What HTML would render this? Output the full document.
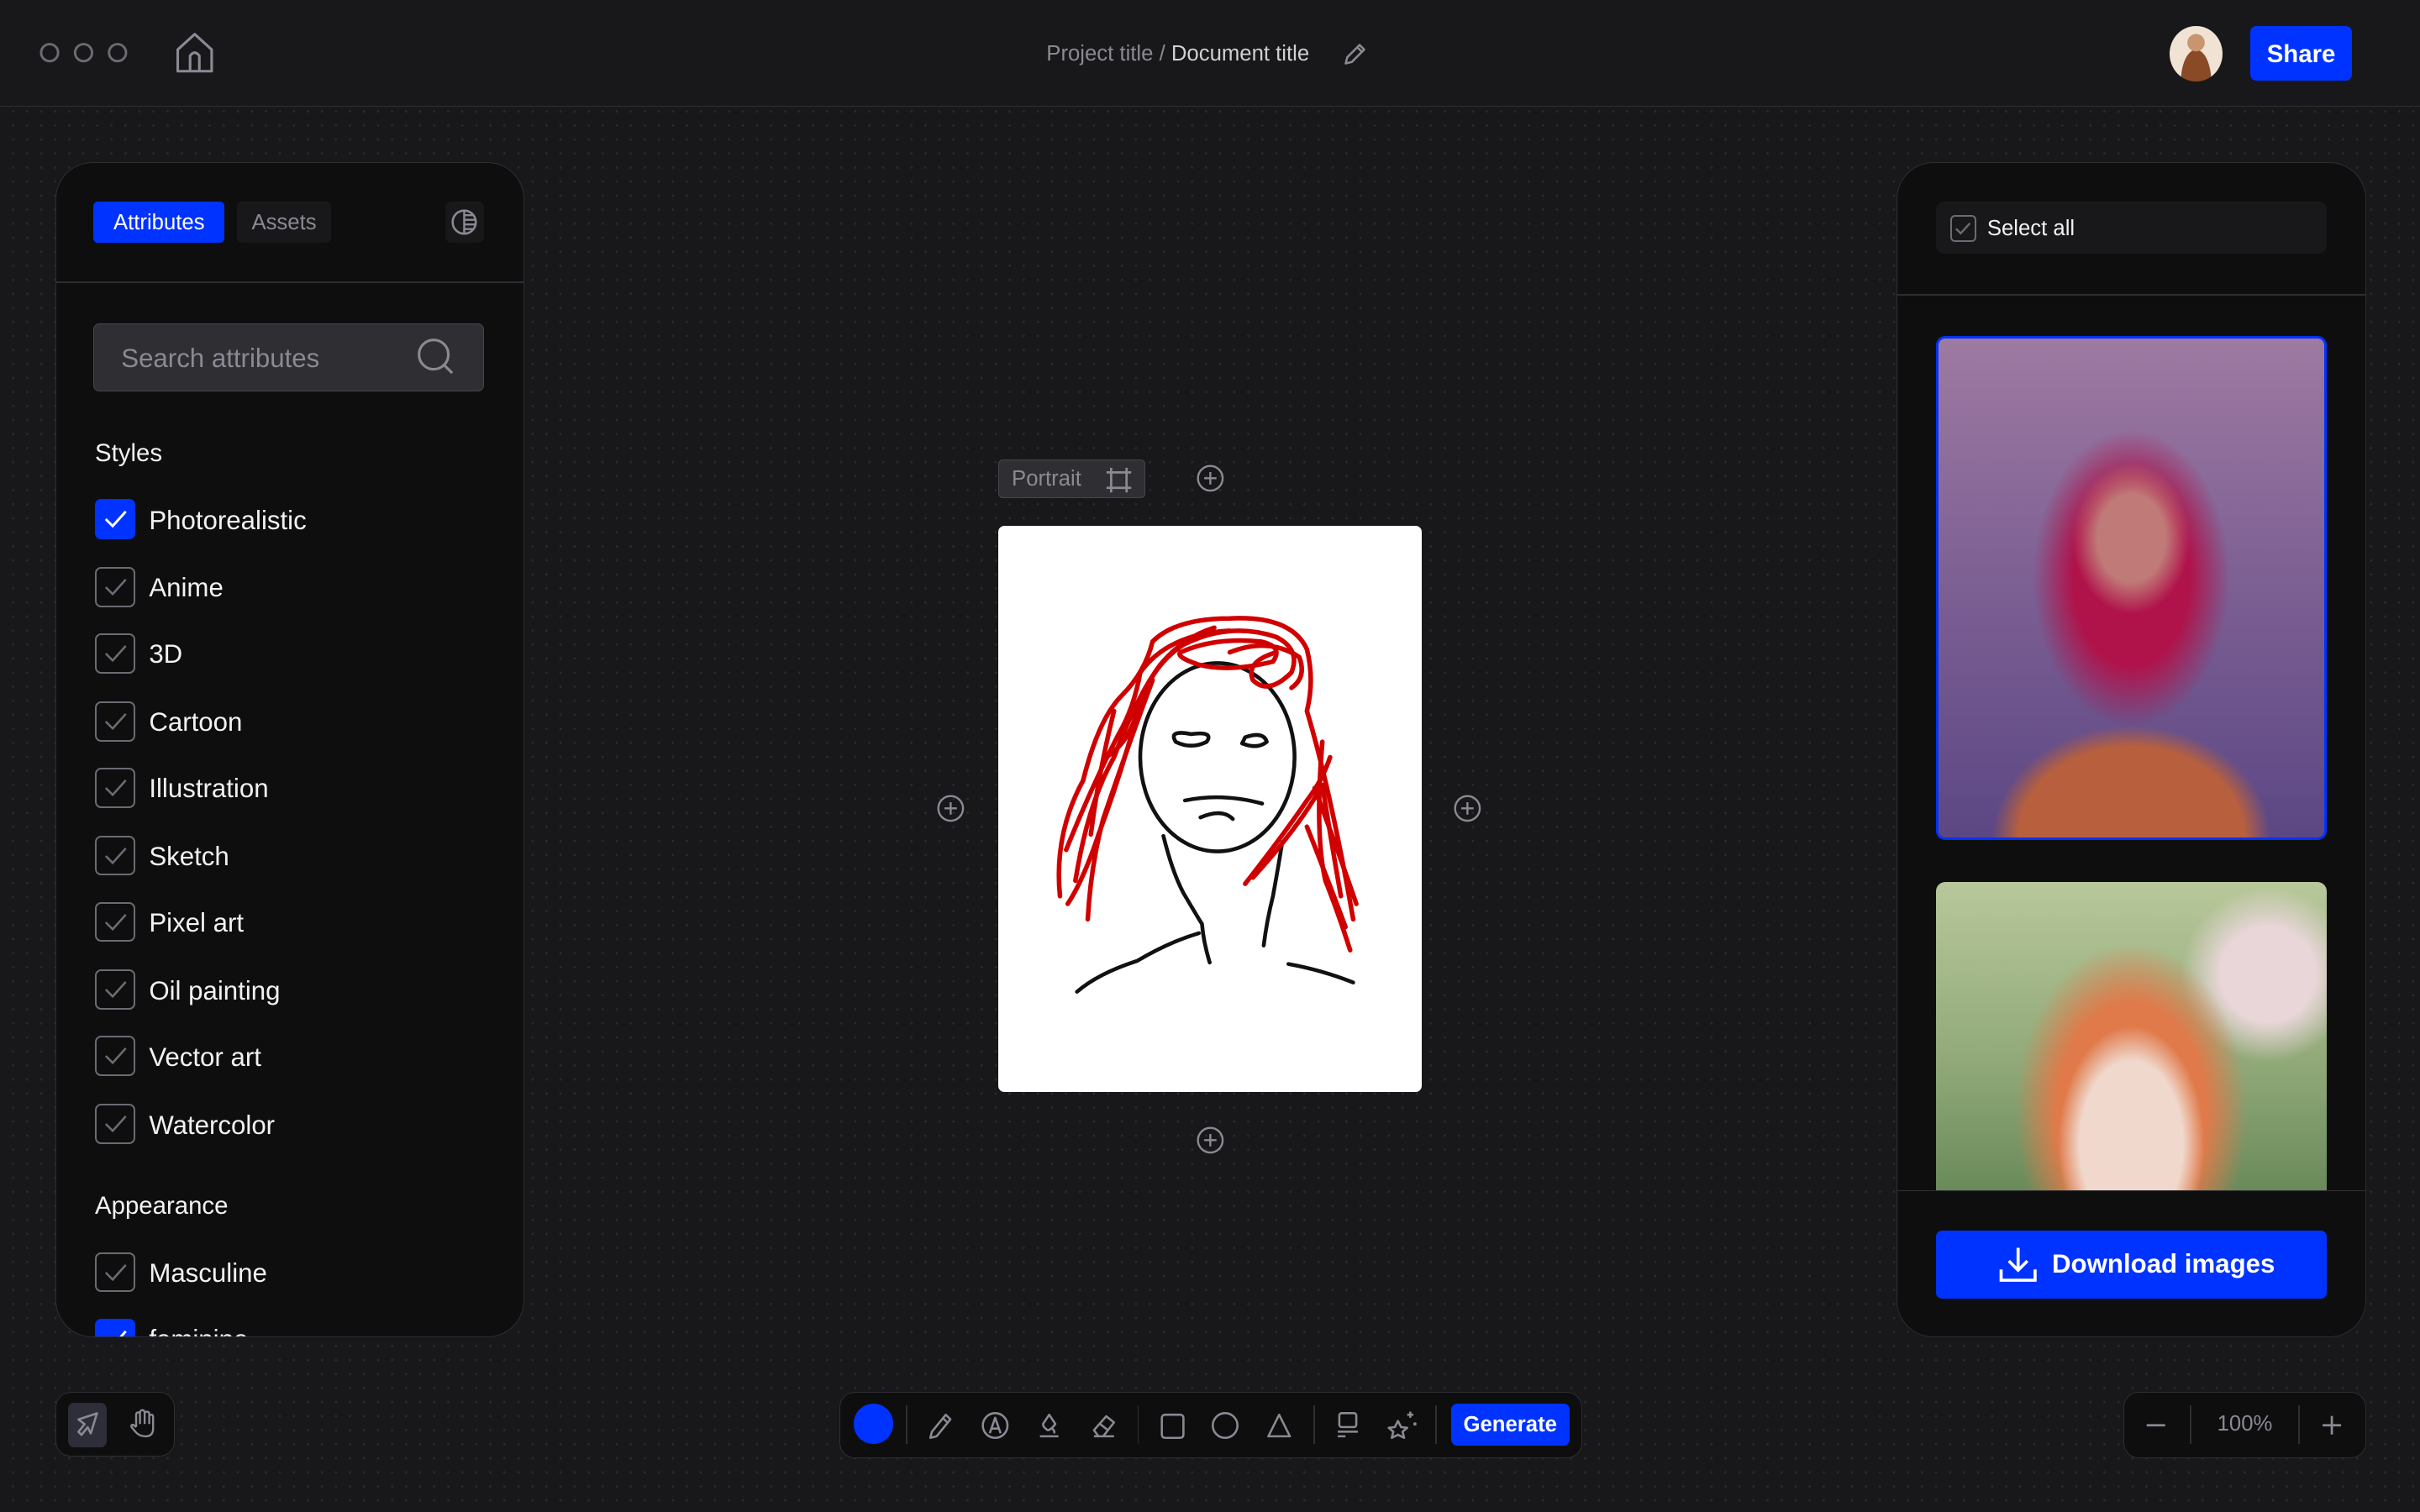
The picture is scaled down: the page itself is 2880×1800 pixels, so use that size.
<!DOCTYPE html>
<html><head><meta charset="utf-8"><style>
*{box-sizing:border-box;margin:0;padding:0}
html,body{width:2880px;height:1800px;overflow:hidden;background:#18181b}
#r{zoom:1.83673;width:1568px;height:980px;position:relative;font-family:"Liberation Sans",sans-serif;background-color:#18181b;background-image:radial-gradient(circle,#2b2b31 0.6px,transparent 0.9px);background-size:9.1px 9.1px;background-position:4px 4px;overflow:hidden}
.a{position:absolute;white-space:nowrap}
.top{left:0;top:0;width:1568px;height:69px;background:#18181b;border-bottom:1px solid #2e2e33}
.panel{background:#0e0e0f;border:1px solid #2e2e33;border-radius:24px;overflow:hidden}
.cb{position:absolute;left:25px;width:26px;height:26px;border:1.3px solid #6b6b73;border-radius:4px}
.cb svg{position:absolute;left:5px;top:6px}
.cb.on{background:#0033ff;border-color:#0033ff}
.lbl{position:absolute;left:60px;font-size:17px;color:#f2f2f2;white-space:nowrap}
.sec{position:absolute;left:25px;font-size:16px;color:#f2f2f2}
.box{background:#0e0e0f;border:1px solid #2e2e33;border-radius:10px}
</style></head><body><div id="r">
<div class="a top"></div>
<svg class="a" style="left:20px;top:26px" width="70" height="18"><g fill="none" stroke="#6b6b73" stroke-width="1.6"><circle cx="12" cy="8" r="5.5"/><circle cx="34" cy="8" r="5.5"/><circle cx="56" cy="8" r="5.5"/></g></svg>
<svg class="a" style="left:112px;top:20px" width="28" height="28" viewBox="0 0 28 28"><path d="M3 12 L14 2 L25 12 V26 H3 Z M11 26 V16 Q14 12 17 16 V26" fill="none" stroke="#8a8a93" stroke-width="1.7" stroke-linejoin="round"/></svg>
<div class="a" style="left:678px;top:27px;font-size:14px;color:#8a8a93">Project title / <span style="color:#d0d0d4">Document title</span></div>
<svg class="a" style="left:869px;top:26px" width="18" height="18" viewBox="0 0 18 18"><path d="M3 15 L4 11 L12 3 L15 6 L7 14 Z M10.5 4.5 L13.5 7.5" fill="none" stroke="#8a8a93" stroke-width="1.4" stroke-linejoin="round"/></svg>
<div class="a" style="left:1406px;top:17px;width:34px;height:36px;border-radius:50%;background:radial-gradient(circle at 50% 30%,#c9956e 0 18%,transparent 19%),radial-gradient(ellipse at 50% 100%,#8a4a25 0 40%,transparent 41%),#f0e3d3"></div>
<div class="a" style="left:1458px;top:17px;width:66px;height:35px;background:#0033ff;border-radius:4px;color:#fff;font-size:16px;font-weight:bold;text-align:center;line-height:37px">Share</div>

<!-- left panel -->
<div class="a panel" style="left:36px;top:105px;width:304px;height:762px">
 <div class="a" style="left:24px;top:25px;width:85px;height:27px;background:#0033ff;border-radius:3px;color:#fff;font-size:14px;line-height:28px;text-align:center">Attributes</div>
 <div class="a" style="left:117px;top:25px;width:61px;height:27px;background:#18181b;border-radius:3px;color:#8a8a93;font-size:14px;line-height:28px;text-align:center">Assets</div>
 <div class="a" style="left:252px;top:25px;width:25px;height:27px;background:#18181b;border-radius:4px"></div>
 <svg class="a" style="left:255px;top:29px" width="19" height="19" viewBox="0 0 19 19"><circle cx="9.5" cy="9.5" r="7.5" fill="none" stroke="#8a8a93" stroke-width="1.4"/><path d="M9.5 2V17M9.5 5H15M9.5 8H16.5M9.5 11H16.5M9.5 14H15" stroke="#8a8a93" stroke-width="1.3"/></svg>
 <div class="a" style="left:0;top:77px;width:304px;height:1px;background:#2e2e33"></div>
 <div class="a" style="left:24px;top:104px;width:253px;height:44px;background:#2e2e33;border:1px solid #45454b;border-radius:4px"></div>
 <div class="a" style="left:42px;top:117px;font-size:17px;color:#8a8a93">Search attributes</div>
 <svg class="a" style="left:233px;top:113px" width="26" height="26" viewBox="0 0 26 26"><circle cx="11.5" cy="11.5" r="9.5" fill="none" stroke="#8a8a93" stroke-width="1.7"/><path d="M18 18L23.5 23.5" stroke="#8a8a93" stroke-width="1.7"/></svg>
 <div class="sec" style="top:179px">Styles</div>
 <div style="position:absolute;left:0;top:0;width:304px">
  <div class="cb on" style="top:218px"><svg width="15" height="12" viewBox="0 0 15 12"><path d="M1 6L5.5 10.5L14 1" fill="none" stroke="#fff" stroke-width="1.6"/></svg></div><div class="lbl" style="top:222px">Photorealistic</div>
  <div class="cb" style="top:262px"><svg width="15" height="12" viewBox="0 0 15 12"><path d="M1 6L5.5 10.5L14 1" fill="none" stroke="#6b6b73" stroke-width="1.4"/></svg></div><div class="lbl" style="top:266px">Anime</div>
  <div class="cb" style="top:305px"><svg width="15" height="12" viewBox="0 0 15 12"><path d="M1 6L5.5 10.5L14 1" fill="none" stroke="#6b6b73" stroke-width="1.4"/></svg></div><div class="lbl" style="top:309px">3D</div>
  <div class="cb" style="top:349px"><svg width="15" height="12" viewBox="0 0 15 12"><path d="M1 6L5.5 10.5L14 1" fill="none" stroke="#6b6b73" stroke-width="1.4"/></svg></div><div class="lbl" style="top:353px">Cartoon</div>
  <div class="cb" style="top:392px"><svg width="15" height="12" viewBox="0 0 15 12"><path d="M1 6L5.5 10.5L14 1" fill="none" stroke="#6b6b73" stroke-width="1.4"/></svg></div><div class="lbl" style="top:396px">Illustration</div>
  <div class="cb" style="top:436px"><svg width="15" height="12" viewBox="0 0 15 12"><path d="M1 6L5.5 10.5L14 1" fill="none" stroke="#6b6b73" stroke-width="1.4"/></svg></div><div class="lbl" style="top:440px">Sketch</div>
  <div class="cb" style="top:479px"><svg width="15" height="12" viewBox="0 0 15 12"><path d="M1 6L5.5 10.5L14 1" fill="none" stroke="#6b6b73" stroke-width="1.4"/></svg></div><div class="lbl" style="top:483px">Pixel art</div>
  <div class="cb" style="top:523px"><svg width="15" height="12" viewBox="0 0 15 12"><path d="M1 6L5.5 10.5L14 1" fill="none" stroke="#6b6b73" stroke-width="1.4"/></svg></div><div class="lbl" style="top:527px">Oil painting</div>
  <div class="cb" style="top:566px"><svg width="15" height="12" viewBox="0 0 15 12"><path d="M1 6L5.5 10.5L14 1" fill="none" stroke="#6b6b73" stroke-width="1.4"/></svg></div><div class="lbl" style="top:570px">Vector art</div>
  <div class="cb" style="top:610px"><svg width="15" height="12" viewBox="0 0 15 12"><path d="M1 6L5.5 10.5L14 1" fill="none" stroke="#6b6b73" stroke-width="1.4"/></svg></div><div class="lbl" style="top:614px">Watercolor</div>
  <div class="sec" style="top:667px">Appearance</div>
  <div class="cb" style="top:706px"><svg width="15" height="12" viewBox="0 0 15 12"><path d="M1 6L5.5 10.5L14 1" fill="none" stroke="#6b6b73" stroke-width="1.4"/></svg></div><div class="lbl" style="top:710px">Masculine</div>
  <div class="cb on" style="top:749px"><svg width="15" height="12" viewBox="0 0 15 12"><path d="M1 6L5.5 10.5L14 1" fill="none" stroke="#fff" stroke-width="1.6"/></svg></div><div class="lbl" style="top:753px">feminine</div>
 </div>
</div>

<!-- canvas -->
<div class="a" style="left:647px;top:298px;width:95px;height:25px;background:#2e2e33;border:1px solid #45454b;border-radius:3px;color:#8a8a93;font-size:14px;line-height:24px;padding-left:8px">Portrait</div>
<svg class="a" style="left:716px;top:302px" width="18" height="18" viewBox="0 0 18 18"><path d="M4 1V17M14 1V17M1 4H17M1 14H17" stroke="#8a8a93" stroke-width="1.5"/></svg>
<svg class="a" style="left:774px;top:300px" width="20" height="20"><circle cx="10" cy="10" r="8" fill="none" stroke="#8a8a93" stroke-width="1.3"/><path d="M10 6V14M6 10H14" stroke="#8a8a93" stroke-width="1.3"/></svg>
<svg class="a" style="left:606px;top:514px" width="20" height="20"><circle cx="10" cy="10" r="8" fill="none" stroke="#8a8a93" stroke-width="1.3"/><path d="M10 6V14M6 10H14" stroke="#8a8a93" stroke-width="1.3"/></svg>
<svg class="a" style="left:941px;top:514px" width="20" height="20"><circle cx="10" cy="10" r="8" fill="none" stroke="#8a8a93" stroke-width="1.3"/><path d="M10 6V14M6 10H14" stroke="#8a8a93" stroke-width="1.3"/></svg>
<svg class="a" style="left:774px;top:729px" width="20" height="20"><circle cx="10" cy="10" r="8" fill="none" stroke="#8a8a93" stroke-width="1.3"/><path d="M10 6V14M6 10H14" stroke="#8a8a93" stroke-width="1.3"/></svg>
<div class="a" style="left:647px;top:341px;width:274px;height:367px;background:#fff;border-radius:4px"></div>
<svg class="a" style="left:647px;top:341px" width="274" height="367" viewBox="0 0 274 367" fill="none" stroke-linecap="round" stroke-linejoin="round">
 <g stroke="#111" stroke-width="2.5">
  <ellipse cx="142" cy="150" rx="50" ry="61"/>
  <path d="M125 135 Q110 132 115 140 Q125 145 135 140 Q140 133 125 135Z"/>
  <path d="M160 137 Q172 133 174 140 Q168 145 158 141Z"/>
  <path d="M121 178 Q145 173 171 180"/>
  <path d="M131 189 Q145 183 152 190"/>
  <path d="M107 201 Q113 225 120 238 Q130 255 132 258 Q133 270 137 283"/>
  <path d="M51 302 Q65 290 90 282 Q110 270 130 264"/>
  <path d="M172 272 Q174 256 178 240 Q182 218 184 205"/>
  <path d="M188 284 Q210 288 230 296"/>
 </g>
 <g stroke="#d00000" stroke-width="3">
  <path d="M40 240 Q36 200 55 165 Q65 125 80 110 Q95 95 100 75 Q115 60 150 60 Q190 58 200 80 Q205 100 200 120 Q215 170 230 255"/>
  <path d="M45 245 Q55 230 65 200 Q80 160 92 115 Q100 90 120 77 Q150 62 180 72 Q196 80 190 95 Q175 110 165 100 Q160 88 180 82"/>
  <path d="M50 230 Q58 180 75 150 Q90 110 105 90 Q120 72 140 66"/>
  <path d="M58 255 Q60 220 68 190 Q85 140 100 100"/>
  <path d="M44 210 Q60 170 78 135 Q88 118 92 95 Q110 70 150 68"/>
  <path d="M210 140 Q205 200 212 230 Q220 250 228 275"/>
  <path d="M160 232 Q185 200 200 178 Q210 165 215 150"/>
  <path d="M165 228 Q195 195 210 168 Q215 200 222 240"/>
  <path d="M200 195 Q210 220 225 260 M205 170 Q220 210 232 245"/>
  <path d="M118 82 Q140 72 170 75 Q185 78 178 88 Q150 95 130 90 Q115 85 118 82Z"/>
  <path d="M150 82 Q175 72 195 85 Q200 98 190 105"/>
  <path d="M75 120 Q65 160 60 200 M70 150 Q85 140 90 120"/>
 </g>
</svg>

<!-- right panel -->
<div class="a panel" style="left:1229px;top:105px;width:304px;height:762px">
 <div class="a" style="left:25px;top:25px;width:253px;height:34px;background:#18181b;border-radius:5px"></div>
 <div class="a" style="left:34px;top:34px;width:17px;height:17px;border:1.3px solid #6b6b73;border-radius:3px"></div>
 <svg class="a" style="left:37px;top:38px" width="11" height="9" viewBox="0 0 11 9"><path d="M1 4.5L4 7.5L10 1" fill="none" stroke="#6b6b73" stroke-width="1.3"/></svg>
 <div class="a" style="left:58px;top:35px;font-size:14px;color:#f2f2f2">Select all</div>
 <div class="a" style="left:0;top:85px;width:304px;height:1px;background:#2e2e33"></div>
 <div class="a" style="left:25px;top:112px;width:253px;height:327px;border:2px solid #0033ff;border-radius:6px;overflow:hidden;background:radial-gradient(ellipse 16% 16% at 50% 40%,#c07a78 0 55%,transparent 95%),radial-gradient(ellipse 30% 35% at 50% 48%,#b0124a 0 50%,transparent 85%),radial-gradient(ellipse 45% 28% at 50% 100%,#b8603e 0 65%,transparent 80%),linear-gradient(180deg,#9e7aa2 0%,#7c5f93 50%,#5c4784 100%)"></div>
 <div class="a" style="left:25px;top:466px;width:253px;height:200px;border-radius:6px 6px 0 0;overflow:hidden;background:radial-gradient(ellipse 22% 45% at 50% 85%,#f0d8cc 0 60%,transparent 85%),radial-gradient(ellipse 35% 65% at 50% 75%,#e07a4a 0 55%,transparent 85%),radial-gradient(circle at 85% 30%,#e8d6d8 0 12%,transparent 22%),linear-gradient(180deg,#b8c89a 0%,#90a878 60%,#6a8a5a 100%)"></div>
 <div class="a" style="left:0;top:666px;width:304px;height:96px;background:#0e0e0f;border-top:1px solid #2e2e33"></div>
 <div class="a" style="left:25px;top:692px;width:253px;height:44px;background:#0033ff;border-radius:4px;color:#fff;font-size:17px;font-weight:bold;line-height:44px;padding-left:75px">Download images</div>
 <svg class="a" style="left:64px;top:700px" width="28" height="28" viewBox="0 0 28 28"><path d="M14 3V17M8 11.5L14 17.5L20 11.5M3 17V24H25V17" fill="none" stroke="#fff" stroke-width="2"/></svg>
</div>

<!-- bottom left -->
<div class="a box" style="left:36px;top:902px;width:77px;height:42px"></div>
<div class="a" style="left:44px;top:909px;width:25px;height:29px;background:#2e2e38;border-radius:4px"></div>
<svg class="a" style="left:47px;top:913px" width="20" height="20" viewBox="0 0 20 20"><path d="M16 3L4 7L8 10L4 15L6 17L10 12L12 16Z" fill="none" stroke="#8a8a93" stroke-width="1.4" stroke-linejoin="round"/></svg>
<svg class="a" style="left:82px;top:912px" width="20" height="22" viewBox="0 0 20 22"><path d="M6 13V5Q6 3.5 7.3 3.5Q8.5 3.5 8.5 5V11M8.5 4Q8.5 2 10 2Q11.5 2 11.5 4V11M11.5 4.5Q11.5 3 13 3Q14.5 3 14.5 4.5V11M14.5 6Q14.5 5 15.8 5Q17 5 17 6.5V14Q17 19 12 19Q8 19 5.5 16L3 13Q2.5 11.5 4 11.5L6 13" fill="none" stroke="#8a8a93" stroke-width="1.3" stroke-linejoin="round"/></svg>

<!-- toolbar -->
<div class="a box" style="left:544px;top:902px;width:481px;height:43px"></div>
<div class="a" style="left:553px;top:910px;width:26px;height:26px;border-radius:50%;background:#0033ff"></div>
<div class="a" style="left:587px;top:911px;width:1px;height:25px;background:#2e2e33"></div>
<div class="a" style="left:737px;top:911px;width:1px;height:25px;background:#2e2e33"></div>
<div class="a" style="left:851px;top:911px;width:1px;height:25px;background:#2e2e33"></div>
<div class="a" style="left:930px;top:911px;width:1px;height:25px;background:#2e2e33"></div>
<svg class="a" style="left:598px;top:912px" width="330" height="24" viewBox="0 0 330 24" fill="none" stroke="#8a8a93" stroke-width="1.4" stroke-linejoin="round">
 <path d="M5 20L6 16L15 5L18 8L9 19Z M13 7L16 10"/>
 <circle cx="47" cy="12" r="8"/><path d="M43.5 17L47 7L50.5 17M44.5 14H49.5"/>
 <path d="M76 19H88M82 5L86 11Q83 15 81 15Q78 13 78 11Z M84 14Q86 16 85 17"/>
 <path d="M111 19H124M111 15L119 6L124 10L117 19H114Z M115 11L120 15"/>
 <rect x="155" y="5" width="14" height="15" rx="2"/>
 <circle cx="196" cy="12" r="8"/>
 <path d="M231 5L238 19H224Z"/>
 <rect x="270" y="4" width="11" height="9" rx="1.5"/><path d="M269 16H282M269 19H274"/>
 <path d="M308 9L310 13L314 13.5L311 16L312 20L308 18L304 20L305 16L302 13.5L306 13Z M316 3V7M314 5H318M319 10V12M318 11H320"/>
</svg>
<div class="a" style="left:940px;top:910px;width:77px;height:27px;background:#0033ff;border-radius:4px;color:#fff;font-size:14px;font-weight:bold;text-align:center;line-height:28px">Generate</div>

<!-- zoom -->
<div class="a box" style="left:1376px;top:902px;width:157px;height:43px"></div>
<div class="a" style="left:1419px;top:911px;width:1px;height:25px;background:#2e2e33"></div>
<div class="a" style="left:1489px;top:911px;width:1px;height:25px;background:#2e2e33"></div>
<svg class="a" style="left:1389px;top:916px" width="130" height="16" fill="none" stroke="#8a8a93" stroke-width="1.5"><path d="M2 8H14M116 8H128M122 2V14"/></svg>
<div class="a" style="left:1420px;top:915px;width:69px;text-align:center;font-size:14px;color:#8a8a93">100%</div>
</div></body></html>
